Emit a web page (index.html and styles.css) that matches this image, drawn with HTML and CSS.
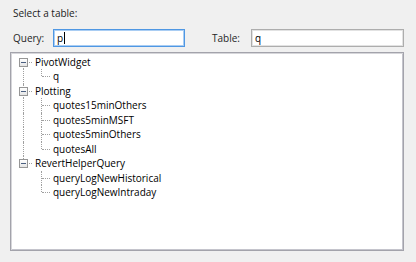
FILE: index.html
```html
<!DOCTYPE html>
<html>
<head>
<meta charset="utf-8">
<link rel="stylesheet" href="styles.css">
</head>
<body>
<div class="dialog">
  <div class="prompt">Select a table:</div>
  <div class="search">
    <label class="lbl">Query:</label>
    <div class="input focus">p<span class="caret"></span></div>
    <label class="lbl lbl-table">Table:</label>
    <div class="input input-table">q</div>
  </div>
  <div class="tree">
    <div class="row"><span class="cell v-bot h"><span class="exp"></span></span><span class="text">PivotWidget</span></div>
    <div class="row"><span class="cell v-full"></span><span class="cell v-top h"></span><span class="text">q</span></div>
    <div class="row"><span class="cell v-full h"><span class="exp"></span></span><span class="text">Plotting</span></div>
    <div class="row"><span class="cell v-full"></span><span class="cell v-full h"></span><span class="text">quotes15minOthers</span></div>
    <div class="row"><span class="cell v-full"></span><span class="cell v-full h"></span><span class="text">quotes5minMSFT</span></div>
    <div class="row"><span class="cell v-full"></span><span class="cell v-full h"></span><span class="text">quotes5minOthers</span></div>
    <div class="row"><span class="cell v-full"></span><span class="cell v-top h"></span><span class="text">quotesAll</span></div>
    <div class="row"><span class="cell v-top h"><span class="exp"></span></span><span class="text">RevertHelperQuery</span></div>
    <div class="row"><span class="cell"></span><span class="cell v-full h"></span><span class="text">queryLogNewHistorical</span></div>
    <div class="row"><span class="cell"></span><span class="cell v-top h"></span><span class="text">queryLogNewIntraday</span></div>
  </div>
</div>
</body>
</html>
```

FILE: styles.css
```css
html, body {
  margin: 0;
  padding: 0;
  background: #f0f0f0;
}
body {
  width: 416px;
  height: 262px;
  overflow: hidden;
  font-family: "Segoe UI", "Open Sans", "Noto Sans", sans-serif;
  font-size: 10px;
  color: #1b1b1b;
}
.dialog {
  padding: 6px 12px 0 10px;
}
.prompt {
  padding-left: 3px;
  height: 14px;
  line-height: 14px;
}
.search {
  margin-top: 9px;
  height: 18px;
  display: flex;
  align-items: center;
  padding-left: 3px;
}
.lbl {
  width: 40px;
  flex: none;
  line-height: 16px;
  color: #262626;
}
.lbl-table {
  width: 39px;
  margin-left: 27px;
}
.input {
  box-sizing: border-box;
  height: 18px;
  width: 132px;
  flex: none;
  background: #fff;
  border: 1px solid #adadad;
  box-shadow: inset 0 0 0 1px #e2e2e2;
  padding-left: 3px;
  line-height: 16px;
  display: flex;
  align-items: center;
  color: #000;
}
.input.focus {
  border-color: #4f97e3;
  box-shadow: inset 0 0 0 1px #a9cdf3;
}
.input-table {
  width: 153px;
}
.caret {
  display: inline-block;
  width: 1px;
  height: 12px;
  background: #000;
  margin-left: 1px;
}
.tree {
  margin-top: 5px;
  box-sizing: border-box;
  height: 199px;
  background: #fff;
  border: 1px solid #a3a3ab;
  box-shadow: inset 1px 1px 0 #d6d6da, inset -1px -1px 0 #c4c4cc;
  padding: 2px 0 0 3px;
}
.row {
  display: flex;
  height: 14px;
  line-height: 14px;
}
.row:nth-child(even) {
  height: 15px;
}
.cell {
  position: relative;
  width: 18px;
  flex: none;
  display: flex;
  align-items: flex-start;
}
.v-full::before,
.v-top::before,
.v-bot::before {
  content: "";
  position: absolute;
  left: 9px;
  border-left: 1px dotted #a0a0a0;
}
.v-full::before {
  top: 0;
  bottom: 0;
}
.v-top::before {
  top: 0;
  height: 7px;
}
.v-bot::before {
  top: 7px;
  bottom: 0;
}
.h::after {
  content: "";
  position: absolute;
  left: 10px;
  right: 0;
  top: 7px;
  border-top: 1px dotted #a0a0a0;
}
.exp {
  position: relative;
  z-index: 1;
  box-sizing: border-box;
  width: 9px;
  height: 9px;
  margin: 3px 0 0 5px;
  border: 1px solid #969696;
  background: linear-gradient(#ffffff, #e4e4e4);
}
.exp::after {
  content: "";
  position: absolute;
  left: 1px;
  top: 3px;
  width: 5px;
  height: 1px;
  background: #4a5f80;
}
.text {
  padding-left: 3px;
  white-space: nowrap;
  color: #000;
}
```
